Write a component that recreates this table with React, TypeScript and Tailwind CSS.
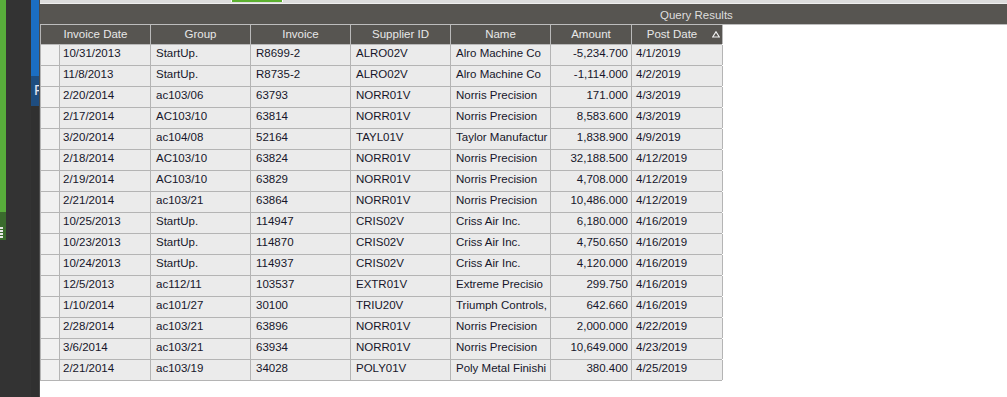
import React from "react";

type Row = [string, string, string, string, string, string, string];

const rows: Row[] = [
  ["10/31/2013", "StartUp.", "R8699-2", "ALRO02V", "Alro Machine Co", "-5,234.700", "4/1/2019"],
  ["11/8/2013", "StartUp.", "R8735-2", "ALRO02V", "Alro Machine Co", "-1,114.000", "4/2/2019"],
  ["2/20/2014", "ac103/06", "63793", "NORR01V", "Norris Precision", "171.000", "4/3/2019"],
  ["2/17/2014", "AC103/10", "63814", "NORR01V", "Norris Precision", "8,583.600", "4/3/2019"],
  ["3/20/2014", "ac104/08", "52164", "TAYL01V", "Taylor Manufactur", "1,838.900", "4/9/2019"],
  ["2/18/2014", "AC103/10", "63824", "NORR01V", "Norris Precision", "32,188.500", "4/12/2019"],
  ["2/19/2014", "AC103/10", "63829", "NORR01V", "Norris Precision", "4,708.000", "4/12/2019"],
  ["2/21/2014", "ac103/21", "63864", "NORR01V", "Norris Precision", "10,486.000", "4/12/2019"],
  ["10/25/2013", "StartUp.", "114947", "CRIS02V", "Criss Air Inc.", "6,180.000", "4/16/2019"],
  ["10/23/2013", "StartUp.", "114870", "CRIS02V", "Criss Air Inc.", "4,750.650", "4/16/2019"],
  ["10/24/2013", "StartUp.", "114937", "CRIS02V", "Criss Air Inc.", "4,120.000", "4/16/2019"],
  ["12/5/2013", "ac112/11", "103537", "EXTR01V", "Extreme Precisio", "299.750", "4/16/2019"],
  ["1/10/2014", "ac101/27", "30100", "TRIU20V", "Triumph Controls,", "642.660", "4/16/2019"],
  ["2/28/2014", "ac103/21", "63896", "NORR01V", "Norris Precision", "2,000.000", "4/22/2019"],
  ["3/6/2014", "ac103/21", "63934", "NORR01V", "Norris Precision", "10,649.000", "4/23/2019"],
  ["2/21/2014", "ac103/19", "34028", "POLY01V", "Poly Metal Finishi", "380.400", "4/25/2019"],
];

const cell = "h-full shrink-0 overflow-hidden whitespace-nowrap border-r border-[#b4b4b4] leading-[17px]";
const head = "h-full shrink-0 border-r border-[#b9b9b9] text-center leading-[19px]";

function Sidebar() {
  return (
    <div className="flex h-full w-[40px] shrink-0">
      <div className="flex w-[6px] flex-col bg-[#333333]">
        <div className="h-[212px] bg-[#58ad3b]" />
        <div className="flex h-[28px] flex-col justify-end gap-[1px] bg-[#3a6b2d] pb-[2px]">
          {[0, 1, 2, 3].map((i) => (
            <div key={i} className="h-[2px] w-[3px] bg-[#e8e8e8]" />
          ))}
        </div>
      </div>
      <div className="w-[25px] bg-[#333333]" />
      <div className="flex w-[8px] flex-col bg-[#303030]">
        <div className="h-[76px] bg-[#1b6ec3]" />
        <div className="h-[30px] overflow-hidden bg-[#1e4d80] pl-[3px] pt-[5px] font-['Liberation_Sans',Arial,sans-serif] text-[15px] leading-[18px] text-[#e6e6f0]">
          F
        </div>
      </div>
      <div className="w-[1px] bg-[#4a4a4a]" />
    </div>
  );
}

export default function App() {
  return (
    <div className="flex h-[397px] w-[1007px] overflow-hidden bg-white font-['Liberation_Sans',Arial,sans-serif]">
      <Sidebar />
      <div className="flex min-w-0 flex-1 flex-col">
        <div className="flex h-[3px] bg-[#dcdcdc]">
          <div className="w-[191px]" />
          <div className="h-[2px] w-[52px] border-x border-white bg-[#5cb030]" />
        </div>
        <div className="h-[1px] bg-[#efefef]" />
        <div className="h-[20px] bg-[#575551] pl-[620px] pt-[1px] text-[11.5px] leading-[20px] text-[#dedede]">
          Query Results
        </div>
        <div className="h-[1px] bg-[#bdbdbd]" />
        <div className="flex w-[682px] flex-col border-l border-[#b4b4b4]">
          <div className="flex h-[20px] border-b border-[#b9b9b9] bg-[#575551] text-[11.5px] text-[#e8e8e8]">
            <div className={`${head} w-[110px]`}>Invoice Date</div>
            <div className={`${head} w-[100px]`}>Group</div>
            <div className={`${head} w-[100px]`}>Invoice</div>
            <div className={`${head} w-[100px]`}>Supplier ID</div>
            <div className={`${head} w-[100px]`}>Name</div>
            <div className={`${head} w-[81px]`}>Amount</div>
            <div className={`${head} relative w-[91px] pr-[10px]`}>
              Post Date
              <svg className="absolute right-[2px] top-[6px]" width="8" height="7" viewBox="0 0 8 7">
                <path d="M4 0.8 L7.3 6 L0.7 6 Z" fill="none" stroke="#f2f2f2" strokeWidth="1.2" />
              </svg>
            </div>
          </div>
          {rows.map((r, i) => (
            <div
              key={i}
              className="flex h-[21px] border-b border-[#b4b4b4] bg-[#ebebeb] text-[11.5px] text-[#16162a]"
            >
              <div className={`${cell} w-[19px] bg-[#f0f0f0]`} />
              <div className={`${cell} w-[91px] pl-[3px]`}>{r[0]}</div>
              <div className={`${cell} w-[100px] pl-[5px]`}>{r[1]}</div>
              <div className={`${cell} w-[100px] pl-[5px]`}>{r[2]}</div>
              <div className={`${cell} w-[100px] pl-[5px]`}>{r[3]}</div>
              <div className={`${cell} w-[100px] pl-[5px]`}>{r[4]}</div>
              <div className={`${cell} w-[81px] pr-[3px] text-right`}>{r[5]}</div>
              <div className={`${cell} w-[91px] pl-[4px]`}>{r[6]}</div>
            </div>
          ))}
        </div>
      </div>
    </div>
  );
}
